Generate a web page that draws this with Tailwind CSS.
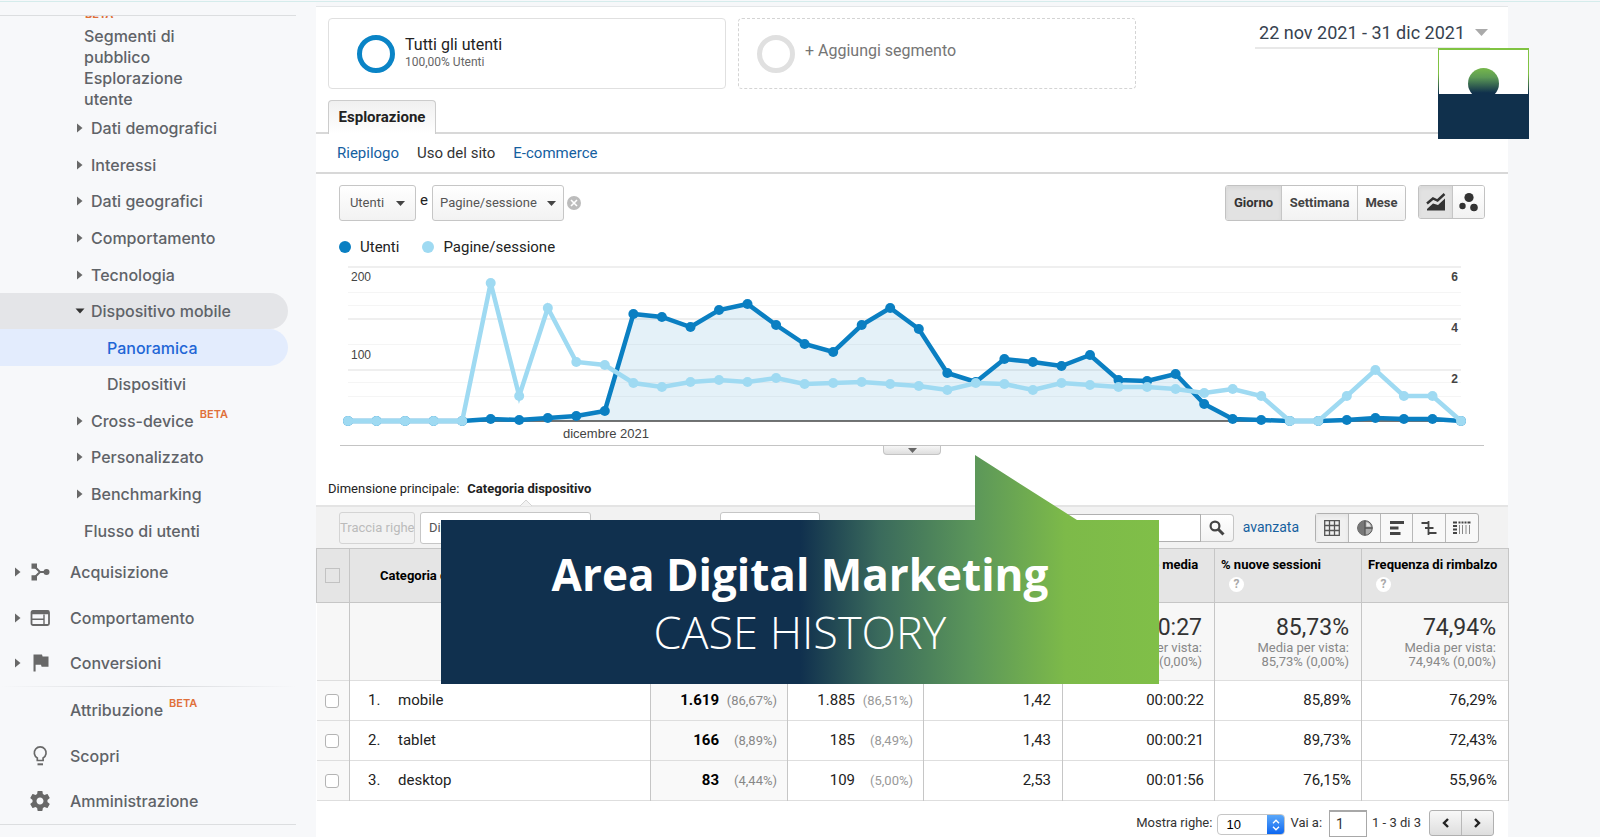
<!DOCTYPE html>
<html lang="it">
<head>
<meta charset="utf-8">
<meta name="viewport" content="width=device-width, initial-scale=1">
<title>Area Digital Marketing - Case History</title>
<script src="https://cdn.jsdelivr.net/npm/@tailwindcss/browser@4"></script>
</head>
<body class="bg-[#f6f7f9] font-['Roboto',sans-serif] text-[#222]">
<div class="relative flex min-h-screen max-h-screen overflow-hidden border-t border-[#f6f8fa]">
  <div class="absolute inset-x-0 top-0 h-px bg-[#d5ecec]"></div>

  <!-- Sidebar -->
  <nav aria-label="Rapporti" class="w-[316px] shrink-0 bg-[#f7f8fa] font-['Inter',sans-serif] text-[16px] font-medium text-[#5f6368]">
    <div class="mr-5 h-[15px] border-b border-[#dcdee0]"></div>
    <div class="h-[4px] overflow-hidden pl-[85px] text-[11px] leading-[4px] font-bold text-[#e0703a]"><span class="-mt-1 block leading-[4px]">BETA</span></div>
    <div class="mt-[6px] flex flex-col pl-[84px] leading-[21px]">
      <a href="#" class="w-[120px]">Segmenti di pubblico</a>
      <a href="#" class="w-[120px]">Esplorazione utente</a>
    </div>
    <ul class="flex h-[439px] flex-col">
      <li class="flex flex-1"><a href="#" class="flex flex-1 items-center pl-[77px]"><svg class="mr-2 h-[10px] w-[6px]" viewBox="0 0 6 10"><path d="M0 0.5L5.500 5L0 9.500z" fill="#686868"/></svg>Dati demografici</a></li>
      <li class="flex flex-1"><a href="#" class="flex flex-1 items-center pl-[77px]"><svg class="mr-2 h-[10px] w-[6px]" viewBox="0 0 6 10"><path d="M0 0.5L5.500 5L0 9.500z" fill="#686868"/></svg>Interessi</a></li>
      <li class="flex flex-1"><a href="#" class="flex flex-1 items-center pl-[77px]"><svg class="mr-2 h-[10px] w-[6px]" viewBox="0 0 6 10"><path d="M0 0.5L5.500 5L0 9.500z" fill="#686868"/></svg>Dati geografici</a></li>
      <li class="flex flex-1"><a href="#" class="flex flex-1 items-center pl-[77px]"><svg class="mr-2 h-[10px] w-[6px]" viewBox="0 0 6 10"><path d="M0 0.5L5.500 5L0 9.500z" fill="#686868"/></svg>Comportamento</a></li>
      <li class="flex flex-1"><a href="#" class="flex flex-1 items-center pl-[77px]"><svg class="mr-2 h-[10px] w-[6px]" viewBox="0 0 6 10"><path d="M0 0.5L5.500 5L0 9.500z" fill="#686868"/></svg>Tecnologia</a></li>
      <li class="flex flex-1"><a href="#" class="mr-7 flex flex-1 items-center rounded-r-full bg-[#e4e5e8] pl-[75px]"><svg class="mr-[6px] h-[6px] w-[10px]" viewBox="0 0 10 6"><path d="M0.500 0.500H9.500L5 5.500z" fill="#333"/></svg>Dispositivo mobile</a></li>
      <li class="flex flex-1"><a href="#" aria-current="page" class="mr-7 flex flex-1 items-center rounded-r-full bg-[#e3ecfd] pl-[107px] text-[#1f66d6]">Panoramica</a></li>
      <li class="flex flex-1"><a href="#" class="flex flex-1 items-center pl-[107px]">Dispositivi</a></li>
      <li class="flex flex-1"><a href="#" class="flex flex-1 items-center pl-[77px]"><svg class="mr-2 h-[10px] w-[6px]" viewBox="0 0 6 10"><path d="M0 0.5L5.500 5L0 9.500z" fill="#686868"/></svg>Cross-device<span class="mb-[14px] ml-[6px] text-[11px] font-semibold text-[#e0703a]">BETA</span></a></li>
      <li class="flex flex-1"><a href="#" class="flex flex-1 items-center pl-[77px]"><svg class="mr-2 h-[10px] w-[6px]" viewBox="0 0 6 10"><path d="M0 0.5L5.500 5L0 9.500z" fill="#686868"/></svg>Personalizzato</a></li>
      <li class="flex flex-1"><a href="#" class="flex flex-1 items-center pl-[77px]"><svg class="mr-2 h-[10px] w-[6px]" viewBox="0 0 6 10"><path d="M0 0.5L5.500 5L0 9.500z" fill="#686868"/></svg>Benchmarking</a></li>
      <li class="flex flex-1"><a href="#" class="flex flex-1 items-center pl-[84px]">Flusso di utenti</a></li>
    </ul>
    <ul class="flex h-[137px] flex-col">
      <li class="flex flex-1"><a href="#" class="flex flex-1 items-center pl-[15px]"><svg class="mr-[9px] h-[10px] w-[6px]" viewBox="0 0 6 10"><path d="M0 0.5L5.500 5L0 9.500z" fill="#686868"/></svg>
        <svg class="mr-5 h-5 w-5" viewBox="0 0 20 20" fill="#686868"><path d="M1.500 1.500h5.500v5.200h-5.500zM1.500 13.300h5.500v5.200h-5.500z"/><circle cx="16.500" cy="10" r="3"/><path d="M5 5L10 10L5 15M10 10H16" fill="none" stroke="#686868" stroke-width="2"/></svg>Acquisizione</a></li>
      <li class="flex flex-1"><a href="#" class="flex flex-1 items-center pl-[15px]"><svg class="mr-[9px] h-[10px] w-[6px]" viewBox="0 0 6 10"><path d="M0 0.5L5.500 5L0 9.500z" fill="#686868"/></svg>
        <svg class="mr-5 h-5 w-5" viewBox="0 0 20 20" fill="none" stroke="#686868"><rect x="1.500" y="3" width="17.500" height="14" rx="1.500" stroke-width="1.800"/><path d="M1.500 4.500H19" stroke-width="3.500"/><path d="M2 11.300H14M14 6.500V16.500" stroke-width="1.400"/></svg>Comportamento</a></li>
      <li class="flex flex-1"><a href="#" class="flex flex-1 items-center pl-[15px]"><svg class="mr-[9px] h-[10px] w-[6px]" viewBox="0 0 6 10"><path d="M0 0.5L5.500 5L0 9.500z" fill="#686868"/></svg>
        <svg class="mr-5 h-5 w-5" viewBox="0 0 20 20" fill="#686868"><path d="M3.500 1.500H12L12.600 3.500H18.500V13.800H11.600L11 11.700H5.600V18.500H3.500z"/></svg>Conversioni</a></li>
    </ul>
    <div class="mr-5 h-px bg-linear-to-r from-transparent via-[#d5d7da] to-transparent"></div>
    <ul class="flex h-[137px] flex-col">
      <li class="flex flex-1"><a href="#" class="flex flex-1 items-center pl-[70px]">Attribuzione<span class="mb-[14px] ml-[6px] text-[11px] font-semibold text-[#e0703a]">BETA</span></a></li>
      <li class="flex flex-1"><a href="#" class="flex flex-1 items-center pl-[30px]"><svg class="mr-5 h-5 w-5" viewBox="0 0 20 20" fill="none" stroke="#686868" stroke-width="1.700"><path d="M7.300 14.500V11.900A5.900 5.900 0 1 1 13.100 11.900V14.500z"/><path d="M7.500 18.300H13" stroke-width="2"/></svg>Scopri</a></li>
      <li class="flex flex-1"><a href="#" class="flex flex-1 items-center pl-[28px]"><svg class="mr-[18px] h-6 w-6" viewBox="0 0 24 24" fill="#686868"><path d="M19.430 12.980c.04-.32.07-.64.07-.98s-.03-.66-.07-.98l2.110-1.650c.19-.15.24-.42.12-.64l-2-3.460c-.12-.22-.39-.3-.61-.22l-2.490 1c-.52-.4-1.080-.73-1.690-.98l-.38-2.650C14.460 2.180 14.250 2 14 2h-4c-.25 0-.46.18-.49.42l-.38 2.650c-.61.25-1.170.59-1.690.98l-2.490-1c-.23-.09-.49 0-.61.22l-2 3.460c-.13.22-.07.49.12.64l2.110 1.650c-.04.32-.07.65-.07.98s.03.66.07.98l-2.110 1.650c-.19.15-.24.42-.12.64l2 3.460c.12.22.39.3.61.22l2.490-1c.52.4 1.080.73 1.690.98l.38 2.650c.03.24.24.42.49.42h4c.25 0 .46-.18.49-.42l.38-2.650c.61-.25 1.170-.59 1.690-.98l2.490 1c.23.09.49 0 .61-.22l2-3.460c.12-.22.07-.49-.12-.64l-2.110-1.650zM12 15.500c-1.930 0-3.500-1.570-3.500-3.500s1.570-3.500 3.500-3.500 3.500 1.570 3.500 3.500-1.570 3.500-3.500 3.500z"/></svg>Amministrazione</a></li>
    </ul>
    <div class="mr-5 h-px bg-[#dcdee0]"></div>
  </nav>

  <!-- Report -->
  <main class="mt-[5px] mr-[92px] flex min-w-0 flex-1 flex-col border-t border-[#e4e6e8] bg-white">
    <header class="flex h-[93px] shrink-0 items-start pt-[11px] pl-3">
      <button class="flex h-[71px] w-[398px] items-center rounded border border-[#e0e0e0] pl-7 text-left">
        <span class="h-[38px] w-[38px] rounded-full border-5 border-[#0a84c6]"></span>
        <span class="mb-1 ml-[10px] flex flex-col"><span class="text-[16px] leading-5">Tutti gli utenti</span><span class="text-[12px] leading-[14px] text-[#666]">100,00% Utenti</span></span>
      </button>
      <button class="ml-3 flex h-[71px] w-[398px] items-center rounded border border-dashed border-[#d4d4d4] pl-[18px] text-left">
        <span class="h-[38px] w-[38px] rounded-full border-5 border-[#e0e0e0]"></span>
        <span class="mb-[6px] ml-[10px] text-[16px] text-[#757575]">+ Aggiungi segmento</span>
      </button>
      <button class="mr-[18px] ml-auto flex h-[31px] items-center border-b-2 border-[#e8e8e8] pr-[2px] pb-px pl-1 text-[18px] text-[#37424f]">22 nov 2021 - 31 dic 2021<svg class="ml-[10px] h-[7px] w-[13px]" viewBox="0 0 13 7"><path d="M0 0H13L6.500 7z" fill="#aaa"/></svg></button>
    </header>

    <div class="flex h-[34px] shrink-0 items-end border-b-2 border-[#d8d8d8] pl-3">
      <button class="-mb-[2px] h-[34px] w-[108px] rounded-t-sm border border-b-0 border-[#ccc] bg-linear-to-b from-[#f0f0f0] to-white text-[15px] font-bold">Esplorazione</button>
    </div>
    <div class="flex h-10 shrink-0 items-center gap-[18px] border-b-2 border-[#d8d8d8] pl-[21px] text-[15px] text-[#15609f]">
      <a href="#">Riepilogo</a><a href="#" class="text-[#333]">Uso del sito</a><a href="#">E-commerce</a>
    </div>

    <div class="mt-[11px] flex h-9 shrink-0 items-start pr-[23px] pl-[23px] text-[13px] text-[#555]">
      <button class="flex h-9 w-[77px] items-center justify-center gap-3 rounded-[3px] border border-[#c6c6c6] bg-linear-to-b from-white to-[#f2f2f2]">Utenti<svg class="h-[5px] w-[9px]" viewBox="0 0 9 5"><path d="M0 0H9L4.500 5z" fill="#444"/></svg></button>
      <span class="mx-[4px] pt-1 text-[15px] text-[#222]">e</span>
      <button class="flex h-9 w-[132px] items-center justify-center gap-[10px] rounded-[3px] border border-[#c6c6c6] bg-linear-to-b from-white to-[#f2f2f2]">Pagine/sessione<svg class="h-[5px] w-[9px]" viewBox="0 0 9 5"><path d="M0 0H9L4.500 5z" fill="#444"/></svg></button>
      <button aria-label="Rimuovi" class="mt-[11px] ml-[3px]"><svg class="h-[14px] w-[14px]" viewBox="0 0 14 14"><circle cx="7" cy="7" r="7" fill="#bcbcbc"/><path d="M4 4L10 10M10 4L4 10" stroke="#fff" stroke-width="1.600"/></svg></button>
      <div class="ml-auto flex h-9 overflow-hidden rounded-[3px] border border-[#c2c2c2] font-bold text-[#444]">
        <button class="w-[55px] bg-[#e2e2e2] text-[#333] inset-shadow-sm">Giorno</button>
        <button class="w-[76px] border-l border-[#c6c6c6] bg-linear-to-b from-white to-[#f2f2f2]">Settimana</button>
        <button class="w-[48px] border-l border-[#c6c6c6] bg-linear-to-b from-white to-[#f2f2f2]">Mese</button>
      </div>
      <div class="ml-3 flex h-[34px] overflow-hidden rounded-[3px] border border-[#c2c2c2]">
        <button aria-label="Grafico a linee" class="flex w-[33px] items-center justify-center bg-[#e2e2e2] inset-shadow-sm"><svg class="h-5 w-5" viewBox="0 0 20 20" fill="#333"><path d="M1 11.500L7 6.500L11.500 8.500L18.500 2" fill="none" stroke="#333" stroke-width="2.400"/><path d="M1 18.500V17L7 11.500L12 13L19 6.500V18.500z"/></svg></button>
        <button aria-label="Grafico animato" class="flex w-8 items-center justify-center border-l border-[#c6c6c6] bg-linear-to-b from-white to-[#f2f2f2]"><svg class="h-5 w-5" viewBox="0 0 20 20" fill="#333"><circle cx="10" cy="5.500" r="4.600"/><circle cx="3.500" cy="14" r="3.200"/><circle cx="15" cy="15.500" r="3.800"/></svg></button>
      </div>
    </div>

    <div class="mt-[15px] flex h-[22px] shrink-0 items-center pl-[23px] text-[15px]">
      <span class="mr-[9px] h-3 w-3 rounded-full bg-[#0a7fc2]"></span>Utenti
      <span class="mr-[9px] ml-[23px] h-3 w-3 rounded-full bg-[#9fdaf2]"></span>Pagine/sessione
    </div>

    <!-- Chart: origin is the main column's left edge -->
    <svg id="chart" class="block h-auto w-full shrink-0" viewBox="0 0 1192 187" font-family="Roboto, sans-serif" role="img" aria-label="Utenti e pagine per sessione">
      <g fill="#f5f5f5"><path d="M32 8h1113v2H32zM32 60h1113v2H32zM32 111h1113v2H32z" fill="#efefef"/><path d="M32 34h1113v1H32zM32 47h1113v1H32zM32 86h1113v1H32zM32 124h1113v1H32zM32 138h1113v1H32z"/></g>
      <g font-family="Liberation Sans, sans-serif" font-size="12" fill="#444"><text x="35" y="23">200</text><text x="35" y="101">100</text><text x="247" y="180" font-size="13">dicembre 2021</text>
      <g font-weight="bold" text-anchor="middle"><text x="1138.500" y="23">6</text><text x="1138.500" y="74">4</text><text x="1138.500" y="125">2</text></g></g>
      <polygon id="area" fill="#0a7fc2" fill-opacity=".11"/>
      <path d="M32 163H1145" stroke="#444" stroke-width="1.500"/>
      <g id="users" fill="#0a7fc2" stroke="#0a7fc2"></g>
      <g id="pages" fill="#9fdaf2" stroke="#9fdaf2"></g>
    </svg>

    <div class="mx-6 flex h-[10px] shrink-0 justify-center border-t border-[#c4c4c4]">
      <button aria-label="Espandi" class="flex h-[9px] w-[58px] items-center justify-center rounded-b-sm border border-t-0 border-[#c4c4c4] bg-linear-to-b from-[#f6f6f6] to-[#dedede]"><svg class="h-[5px] w-[9px]" viewBox="0 0 9 5"><path d="M0 0H9L4.500 5z" fill="#666"/></svg></button>
    </div>

    <div class="mt-6 flex h-[26px] shrink-0 items-start gap-2 pl-3 text-[13px] leading-5"><span>Dimensione principale:</span><b class="relative">Categoria dispositivo<svg class="absolute top-5 left-[52px] h-[7px] w-[14px]" viewBox="0 0 14 7"><path d="M1 7L7 1L13 7" fill="#f2f2f2" stroke="#d4d4d4"/></svg></b></div>

    <div class="flex h-[43px] shrink-0 items-center border-t-2 border-[#e4e4e4] bg-[#f2f2f2] pr-[29px] pl-[23px] text-[14px]">
      <button disabled class="h-8 w-[76px] rounded-[3px] border border-[#d4d4d4] text-[13px] whitespace-nowrap text-[#bbb]">Traccia righe</button>
      <button class="ml-[5px] h-8 w-[171px] rounded-[3px] border border-[#c6c6c6] bg-white pl-2 text-left text-[13px] text-[#555]">Dimensione secondaria</button>
      <button aria-label="Tipo di ordinamento" class="ml-[129px] h-8 w-[100px] rounded-[3px] border border-[#c6c6c6] bg-white"></button>
      <input type="search" aria-label="Cerca" class="ml-auto h-7 w-[182px] border border-[#b0b0b0] bg-white px-2">
      <button aria-label="Avvia ricerca" class="flex h-7 w-[33px] items-center justify-center rounded-r-sm border border-l-0 border-[#c6c6c6] bg-linear-to-b from-white to-[#f2f2f2]"><svg class="h-4 w-4" viewBox="0 0 16 16" fill="none" stroke="#444"><circle cx="6" cy="6" r="4.400" stroke-width="2.200"/><path d="M9 9L14.500 14.500" stroke-width="3"/></svg></button>
      <a href="#" class="mr-4 ml-[9px] text-[#15609f]">avanzata</a>
      <div class="flex h-[30px] divide-x divide-[#b8b8b8] rounded-[3px] border border-[#b0b0b0] bg-[#f8f8f8]">
        <button aria-label="Dati" class="flex w-[33px] items-center justify-center bg-[#f0f0f0] inset-shadow-sm"><svg class="h-4 w-4" viewBox="0 0 16 16" fill="none" stroke="#555" stroke-width="1.300"><path d="M.7 .7H15.300V15.300H.7zM.7 5.500H15.300M.7 10.500H15.300M5.500 .7V15.300M10.500 .7V15.300"/></svg></button>
        <button aria-label="Percentuale" class="flex w-8 items-center justify-center"><svg class="h-4 w-4" viewBox="0 0 16 16"><circle cx="8" cy="8" r="7.300" fill="#aaa" stroke="#555"/><path d="M8 0.500A7.500 7.500 0 0 0 8 15.500z" fill="#777"/><path d="M8 .7V15.300M8 8H15.300" stroke="#555" stroke-width="1.300"/><path d="M9.500 2.300A6 6 0 0 1 13.800 6.500H9.500z" fill="#e5e5e5"/></svg></button>
        <button aria-label="Rendimento" class="flex w-8 items-center justify-center"><svg class="h-4 w-4" viewBox="0 0 16 16" fill="#444"><path d="M1 1h14v3H1zM1 6.500h8.500v3H1zM1 12h10.500v3H1z"/></svg></button>
        <button aria-label="Confronto" class="flex w-[33px] items-center justify-center"><svg class="h-4 w-4" viewBox="0 0 16 16" stroke="#444" stroke-width="1.800"><path d="M.5 3H8M4 8H12.500M8 13H15.500M7.500 1V15" /></svg></button>
        <button aria-label="Pivot" class="flex w-8 items-center justify-center"><svg class="h-4 w-[18px]" viewBox="0 0 18 16" fill="#444"><path d="M0 1.500h4v2H0zM5.500 1.500h2v2h-2zM8.500 1.500h2v2h-2zM11.500 1.500h2v2h-2zM14.500 1.500h3v2h-3zM0 5h4v2H0zM0 8.500h4v2H0zM0 12h4v2H0z"/><path d="M6 5h1v9H6zM9 5h1v9H9zM12.500 5h1v9h-1zM16 5h1v9h-1z" fill="#888"/></svg></button>
      </div>
    </div>

    <table class="w-full table-fixed border-collapse text-[15px]">
      <colgroup><col class="w-[33px]"><col class="w-[301px]"><col class="w-[137px]"><col class="w-[136px]"><col class="w-[139px]"><col class="w-[152px]"><col class="w-[147px]"><col class="w-[147px]"></colgroup>
      <thead>
        <tr class="h-[54px] border border-[#c6c6c6] bg-[#e5e5e5] text-left align-top text-[13px] leading-4 font-bold text-black">
          <th class="border-r border-[#c6c6c6] pl-2 align-middle"><input type="checkbox" disabled aria-label="Seleziona tutto" class="block h-[15px] w-[15px] appearance-none border border-[#c2c2c2]"></th>
          <th class="border-r border-[#c6c6c6] pl-[30px] align-middle">Categoria dispositivo</th>
          <td class="border-r border-[#c6c6c6]"></td>
          <td class="border-r border-[#c6c6c6]"></td>
          <td class="border-r border-[#c6c6c6]"></td>
          <th class="border-r border-[#c6c6c6] pt-2 pl-[2px] whitespace-nowrap">Durata sessione media</th>
          <th class="border-r border-[#c6c6c6] pt-2 pl-[6px] whitespace-nowrap">% nuove sessioni<button aria-label="Guida" class="mt-1 ml-2 block h-[15px] w-[15px] rounded-full bg-white text-[12px] leading-[15px] text-[#aaa]">?</button></th>
          <th class="border-r border-[#c6c6c6] pt-2 pl-[6px] whitespace-nowrap">Frequenza di rimbalzo<button aria-label="Guida" class="mt-1 ml-2 block h-[15px] w-[15px] rounded-full bg-white text-[12px] leading-[15px] text-[#aaa]">?</button></th>
        </tr>
      </thead>
      <tbody class="text-right">
        <tr class="h-[78px] border-b border-[#dedede] bg-[#f7f7f7] text-[13px] leading-[14px] text-[#888]">
          <td class="border-r border-[#c6c6c6]"></td><td class="border-r border-[#c6c6c6]"></td><td class="border-r border-[#c6c6c6]"></td><td class="border-r border-[#c6c6c6]"></td><td class="border-r border-[#c6c6c6]"></td>
          <td class="border-r border-[#c6c6c6] pr-3"><div class="text-[23px] leading-[26px] text-[#333]">00:00:27</div>Media per vista:<br>00:00:27 (0,00%)</td>
          <td class="border-r border-[#c6c6c6] pr-3"><div class="text-[23px] leading-[26px] text-[#333]">85,73%</div>Media per vista:<br>85,73% (0,00%)</td>
          <td class="border-r border-[#c6c6c6] pr-3"><div class="text-[23px] leading-[26px] text-[#333]">74,94%</div>Media per vista:<br>74,94% (0,00%)</td>
        </tr>
        <tr class="h-10 border-b border-[#dedede]">
          <td class="border-r border-[#c6c6c6] bg-[#f9f9f9] pl-2"><input type="checkbox" aria-label="mobile" class="block h-[14px] w-[14px] appearance-none rounded-[3px] border border-[#b4b4b4] bg-white"></td>
          <td class="border-r border-[#c6c6c6] pl-[18px] text-left"><span class="inline-block w-[30px]">1.</span>mobile</td>
          <td class="border-r border-[#c6c6c6] bg-[#f9f9f9] pr-[10px]"><b class="text-black">1.619</b><span class="inline-block w-[58px] text-[13px] text-[#888]">(86,67%)</span></td>
          <td class="border-r border-[#c6c6c6] pr-[10px]">1.885<span class="inline-block w-[58px] text-[13px] text-[#999]">(86,51%)</span></td>
          <td class="border-r border-[#c6c6c6] pr-[11px]">1,42</td><td class="border-r border-[#c6c6c6] pr-[10px]">00:00:22</td><td class="border-r border-[#c6c6c6] pr-[10px]">85,89%</td><td class="border-r border-[#c6c6c6] pr-[11px]">76,29%</td>
        </tr>
        <tr class="h-10 border-b border-[#dedede]">
          <td class="border-r border-[#c6c6c6] bg-[#f9f9f9] pl-2"><input type="checkbox" aria-label="tablet" class="block h-[14px] w-[14px] appearance-none rounded-[3px] border border-[#b4b4b4] bg-white"></td>
          <td class="border-r border-[#c6c6c6] pl-[18px] text-left"><span class="inline-block w-[30px]">2.</span>tablet</td>
          <td class="border-r border-[#c6c6c6] bg-[#f9f9f9] pr-[10px]"><b class="text-black">166</b><span class="inline-block w-[58px] text-[13px] text-[#888]">(8,89%)</span></td>
          <td class="border-r border-[#c6c6c6] pr-[10px]">185<span class="inline-block w-[58px] text-[13px] text-[#999]">(8,49%)</span></td>
          <td class="border-r border-[#c6c6c6] pr-[11px]">1,43</td><td class="border-r border-[#c6c6c6] pr-[10px]">00:00:21</td><td class="border-r border-[#c6c6c6] pr-[10px]">89,73%</td><td class="border-r border-[#c6c6c6] pr-[11px]">72,43%</td>
        </tr>
        <tr class="h-10 border-b border-[#dedede]">
          <td class="border-r border-[#c6c6c6] bg-[#f9f9f9] pl-2"><input type="checkbox" aria-label="desktop" class="block h-[14px] w-[14px] appearance-none rounded-[3px] border border-[#b4b4b4] bg-white"></td>
          <td class="border-r border-[#c6c6c6] pl-[18px] text-left"><span class="inline-block w-[30px]">3.</span>desktop</td>
          <td class="border-r border-[#c6c6c6] bg-[#f9f9f9] pr-[10px]"><b class="text-black">83</b><span class="inline-block w-[58px] text-[13px] text-[#888]">(4,44%)</span></td>
          <td class="border-r border-[#c6c6c6] pr-[10px]">109<span class="inline-block w-[58px] text-[13px] text-[#999]">(5,00%)</span></td>
          <td class="border-r border-[#c6c6c6] pr-[11px]">2,53</td><td class="border-r border-[#c6c6c6] pr-[10px]">00:01:56</td><td class="border-r border-[#c6c6c6] pr-[10px]">76,15%</td><td class="border-r border-[#c6c6c6] pr-[11px]">55,96%</td>
        </tr>
      </tbody>
    </table>

    <footer class="flex shrink-0 items-start justify-end pt-[9px] pr-[14px] text-[13px] leading-[26px] text-[#333]">
      <label for="rows" class="mr-[5px]">Mostra righe:</label>
      <div class="relative mt-1 mr-[5px] flex h-[21px] w-[68px] overflow-hidden rounded border border-[#c6c6c6] bg-white">
        <select id="rows" class="w-full appearance-none pl-2 font-['Liberation_Sans',sans-serif] text-[13px] leading-[18px] text-black"><option>10</option></select>
        <span class="pointer-events-none absolute inset-y-0 right-0 flex w-[17px] items-center justify-center bg-linear-to-b from-[#5aa7f9] to-[#0a66f0]"><svg class="h-3 w-2" viewBox="0 0 8 12" fill="none" stroke="#fff" stroke-width="1.400"><path d="M1 4.200L4 1.200L7 4.200M1 7.800L4 10.800L7 7.800"/></svg></span>
      </div>
      <label for="goto" class="mr-[7px]">Vai a:</label>
      <input id="goto" value="1" class="mr-[5px] h-[27px] w-[38px] border border-t-2 border-[#a8a8a8] bg-white pl-[6px] text-[14px]">
      <span class="mr-2">1 - 3 di 3</span>
      <div class="flex h-[26px] divide-x divide-[#b8b8b8] overflow-hidden rounded-[3px] border border-[#b0b0b0] bg-linear-to-b from-[#f8f8f8] to-[#dedede]">
        <button aria-label="Pagina precedente" class="flex w-8 items-center justify-center"><svg class="h-[10px] w-[7px]" viewBox="0 0 7 10" fill="none" stroke="#222" stroke-width="2.400"><path d="M6 1L2 5L6 9"/></svg></button>
        <button aria-label="Pagina successiva" class="flex w-[31px] items-center justify-center"><svg class="h-[10px] w-[7px]" viewBox="0 0 7 10" fill="none" stroke="#222" stroke-width="2.400"><path d="M1 1L5 5L1 9"/></svg></button>
      </div>
    </footer>
  </main>

  <!-- Brand mark -->
  <svg class="absolute top-[47px] right-[71px] h-[91px] w-[91px]" viewBox="0 0 91 91" role="img" aria-label="Logo">
    <defs><linearGradient id="edge" x1="0" y1="0" x2="0" y2="1"><stop offset="0" stop-color="#80c342"/><stop offset=".28" stop-color="#80c342"/><stop offset=".5" stop-color="#10304c"/></linearGradient>
    <linearGradient id="sun" x1="0" y1="0" x2="0" y2="1"><stop offset="0" stop-color="#76b74b"/><stop offset=".3" stop-color="#5c9a55"/><stop offset=".8" stop-color="#10304c"/></linearGradient></defs>
    <rect width="91" height="91" fill="url(#edge)"/><rect x="1" y="2" width="89" height="45" fill="#fff"/>
    <circle cx="45.500" cy="35.500" r="15.500" fill="url(#sun)"/><rect y="46" width="91" height="45" fill="#10304c"/>
  </svg>

  <!-- Title banner with speech-bubble tail -->
  <section class="absolute top-[454px] left-1/2 flex h-[229px] w-[718px] -translate-x-1/2 flex-col items-center bg-[linear-gradient(90deg,#10304e_50%,#3a6a5c_61%,#5b965a_74%,#7dba49_87%,#80bf48_100%)] pt-[91px] font-['Open_Sans',sans-serif] text-white [clip-path:polygon(0_65px,534px_65px,534px_0,636px_65px,718px_65px,718px_229px,0_229px)]">
    <h1 class="text-[44px] leading-[56px] font-bold">Area Digital Marketing</h1>
    <p class="text-[45px] leading-[60px] font-light">CASE HISTORY</p>
  </section>
</div>
<script>
  const users = [163,163,163,163,163,161,162,160,158,153,56,59,69,52,46,67,86,94,67,50,71,115,124,101,104,108,97,122,123,116,146,161,162,163,163,162,160,161,161,163];
  const pages = [163,163,163,163,163,25,138,50,104,107,125,129,124,122,124,120,126,125,124,126,128,132,125,126,132,125,127,129,129,131,135,131,138,163,163,138,112,138,138,163];
  const x = i => (32 + i * 1113 / 39).toFixed(1);
  const draw = (id, data) => {
    const pts = data.map((y, i) => x(i) + ',' + y).join(' ');
    document.getElementById(id).innerHTML =
      '<polyline fill="none" stroke-width="4.500" points="' + pts + '"/>' +
      data.map((y, i) => '<circle stroke="none" r="5" cx="' + x(i) + '" cy="' + y + '"/>').join('');
    return pts;
  };
  document.getElementById('area').setAttribute('points', '32,163 ' + draw('users', users) + ' 1145,163');
  draw('pages', pages);
</script>
</body>
</html>
